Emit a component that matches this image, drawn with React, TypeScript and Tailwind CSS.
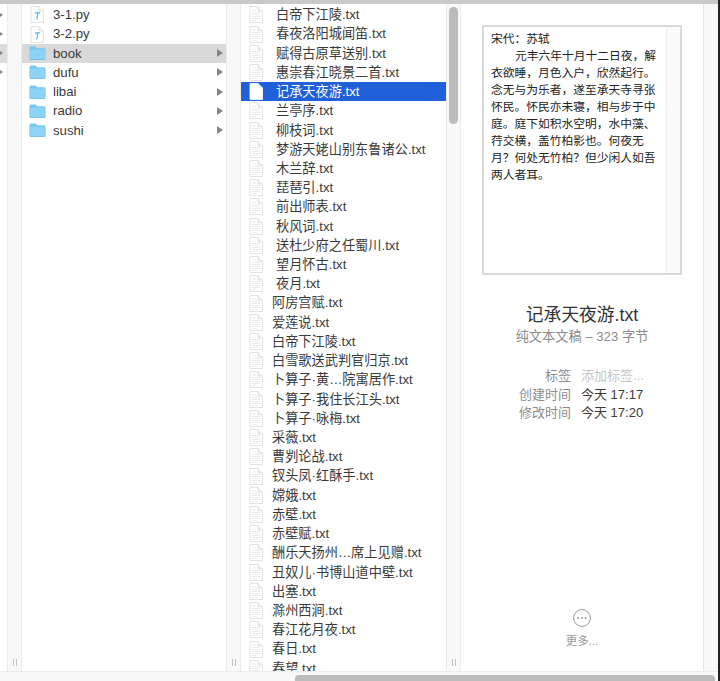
import React from "react";

const FONT = "font-['Liberation_Sans','Noto_Sans_CJK_SC',sans-serif]";

const group1 = ["白帝下江陵", "春夜洛阳城闻笛", "赋得古原草送别", "惠崇春江晓景二首", "记承天夜游", "兰亭序", "柳枝词", "梦游天姥山别东鲁诸公", "木兰辞", "琵琶引", "前出师表", "秋风词", "送杜少府之任蜀川", "望月怀古", "夜月"];
const group2 = ["阿房宫赋", "爱莲说", "白帝下江陵", "白雪歌送武判官归京", "卜算子·黄…院寓居作", "卜算子·我住长江头", "卜算子·咏梅", "采薇", "曹刿论战", "钗头凤·红酥手", "嫦娥", "赤壁", "赤壁赋", "酬乐天扬州…席上见赠", "丑奴儿·书博山道中壁", "出塞", "滁州西涧", "春江花月夜", "春日", "春望"];
const folders = ["book", "dufu", "libai", "radio", "sushi"];
const poem = ["元丰六年十月十二日夜，解", "衣欲睡，月色入户，欣然起行。", "念无与为乐者，遂至承天寺寻张", "怀民。怀民亦未寝，相与步于中", "庭。庭下如积水空明，水中藻、", "荇交横，盖竹柏影也。何夜无", "月？何处无竹柏？但少闲人如吾", "两人者耳。"];

function Arrow({ color = "#858585" }: { color?: string }) {
  return (
    <svg width="6" height="8" viewBox="0 0 6 8" className="shrink-0">
      <path d="M0 0 L6 4 L0 8 Z" fill={color} />
    </svg>
  );
}

function Folder() {
  return (
    <svg width="17" height="14" viewBox="0 0 17 14" className="shrink-0">
      <path d="M0.5 2 Q0.5 0.5 2 0.5 H6 Q7 0.5 7.5 1.5 L8 2.2 H15 Q16.5 2.2 16.5 3.7 V12.5 Q16.5 13.7 15 13.7 H2 Q0.5 13.7 0.5 12.5 Z" fill="#74c6f4" />
      <rect x="0.5" y="3.6" width="16" height="10" rx="1.2" fill="#8dd3f8" />
      <path d="M1 13.5 H16" stroke="#66b8e6" strokeWidth="0.6" />
    </svg>
  );
}

function Doc({ selected = false, lines = true, py = false }: { selected?: boolean; lines?: boolean; py?: boolean }) {
  const stroke = selected ? "#ffffff" : "#dcdcdc";
  return (
    <svg width="14" height="17" viewBox="0 0 14 17" className="shrink-0">
      <path d="M1 0.5 H9 L13.5 5 V16.5 H1 Z" fill="#ffffff" stroke={stroke} strokeWidth="0.8" />
      <path d="M9 0.5 V5 H13.5" fill={selected ? "#dfe8fa" : "#f2f2f2"} stroke={stroke} strokeWidth="0.8" />
      {lines && !selected && (
        <path d="M3 4 H7 M3 6.5 H11 M3 8.5 H11 M3 10.5 H11 M3 12.5 H11 M3 14.5 H8" stroke="#e8e8e8" strokeWidth="0.9" />
      )}
      {py && <path d="M5 7.2 L10 6.6 M8 6.7 L6.8 13.5" stroke="#5ab6f4" strokeWidth="1.2" fill="none" />}
    </svg>
  );
}

function Gutter({ scroll = false }: { scroll?: boolean }) {
  return (
    <div className="flex w-[15px] shrink-0 flex-col items-center border-x border-[#ececec] bg-[#f8f8f8]">
      {scroll && <div className="mt-[3px] h-[117px] w-[9px] rounded-full bg-[#bcbcbc]" />}
      <div className="mb-[5px] mt-auto flex gap-[2px]">
        <div className="h-[7px] w-px bg-[#c4c4c4]" />
        <div className="h-[7px] w-px bg-[#c4c4c4]" />
      </div>
    </div>
  );
}

function FileRow({ name, selected, indent }: { name: string; selected?: boolean; indent: boolean }) {
  return (
    <div className={`flex h-[19.23px] items-center pl-[8px] ${selected ? "bg-[#2060d8] text-white" : ""}`}>
      <Doc selected={selected} />
      <span className={`whitespace-nowrap ${indent ? "ml-[13px]" : "ml-[9px]"}`}>{name}.txt</span>
    </div>
  );
}

export default function App() {
  return (
    <div className={`flex h-[681px] w-[720px] overflow-hidden bg-white text-[13.2px] leading-[19.2px] text-[#3a3a3a] ${FONT}`}>
      <div className="flex w-[718px] shrink-0 flex-col">
        <div className="h-[4px] shrink-0 bg-[#c9c9c9]" />
        <div className="flex min-h-0 flex-1">
          {/* clipped parent column */}
          <div className="flex w-[7px] shrink-0 flex-col overflow-hidden pt-[1.2px]">
            {[0, 1, 2, 3].map((i) => (
              <div key={i} className={`flex h-[19.23px] items-center ${i === 2 ? "bg-[#dcdcdc]" : ""}`}>
                <div className="-ml-[3px]">
                  <Arrow />
                </div>
              </div>
            ))}
          </div>
          <Gutter />
          {/* folder column */}
          <div className="w-[204px] shrink-0 overflow-hidden pt-[1.2px]">
            {["3-1.py", "3-2.py"].map((n) => (
              <div key={n} className="flex h-[19.23px] items-center pl-[8px]">
                <Doc lines={false} py />
                <span className="ml-[9px]">{n}</span>
              </div>
            ))}
            {folders.map((n) => (
              <div key={n} className={`flex h-[19.23px] items-center pl-[7px] pr-[3px] ${n === "book" ? "bg-[#d9d9d9]" : ""}`}>
                <Folder />
                <span className="ml-[7px]">{n}</span>
                <div className="ml-auto">
                  <Arrow />
                </div>
              </div>
            ))}
          </div>
          <Gutter />
          {/* file column */}
          <div className="w-[205px] shrink-0 overflow-hidden pt-[1.2px]">
            {group1.map((n) => (
              <FileRow key={n} name={n} indent selected={n === "记承天夜游"} />
            ))}
            {group2.map((n, i) => (
              <FileRow key={i} name={n} indent={false} />
            ))}
          </div>
          <Gutter scroll />
          {/* preview column */}
          <div className="flex w-[242px] shrink-0 flex-col items-center pt-[21px]">
            <div className="flex h-[250px] w-[200px] shrink-0 border-2 border-[#dadada] bg-white">
              <div className="min-w-0 flex-1 pl-[7px] pt-[1.5px] font-['Noto_Sans_CJK_SC',sans-serif] text-[11.75px] leading-[17.05px] text-[#222222]">
                <div>宋代：苏轼</div>
                {poem.map((l, i) => (
                  <div key={i} className={`whitespace-nowrap ${i === 0 ? "pl-[24px]" : ""}`}>
                    {l}
                  </div>
                ))}
              </div>
              <div className="w-[14px] shrink-0 border-l border-[#efefef] bg-[#fafafa]" />
            </div>
            <div className="mt-[28px] text-[17.8px] leading-[24px] text-[#333333]">记承天夜游.txt</div>
            <div className="text-[13.2px] leading-[19px] text-[#8c8c8c]">纯文本文稿 – 323 字节</div>
            <div className="mt-[21px] grid grid-cols-[104px_116px] gap-x-[10px] text-[13px] leading-[18.7px]">
              <span className="text-right text-[#8c8c8c]">标签</span>
              <span className="text-[#c6c6c6]">添加标签...</span>
              <span className="text-right text-[#8c8c8c]">创建时间</span>
              <span>今天 17:17</span>
              <span className="text-right text-[#8c8c8c]">修改时间</span>
              <span>今天 17:20</span>
            </div>
            <div className="mt-auto flex flex-col items-center pb-[20px]">
              <svg width="18" height="18" viewBox="0 0 18 18">
                <circle cx="9" cy="9" r="8.4" fill="none" stroke="#8e8e8e" strokeWidth="0.9" />
                <circle cx="5.2" cy="9" r="0.9" fill="#8e8e8e" />
                <circle cx="9" cy="9" r="0.9" fill="#8e8e8e" />
                <circle cx="12.8" cy="9" r="0.9" fill="#8e8e8e" />
              </svg>
              <div className="mt-[5px] text-[11.5px] leading-[19px] text-[#9a9a9a]">更多...</div>
            </div>
          </div>
          <div className="flex-1 border-l border-[#e6e6e6] bg-[#f8f8f8]" />
        </div>
        <div className="h-[10px] shrink-0 border-t border-[#ececec] bg-[#f8f8f8] pl-[295px] pr-[3px] pt-[3px]">
          <div className="h-full rounded-t-[4px] bg-[#bcbcbc]" />
        </div>
      </div>
      <div className="w-[2px] shrink-0 bg-[#222222]" />
    </div>
  );
}
